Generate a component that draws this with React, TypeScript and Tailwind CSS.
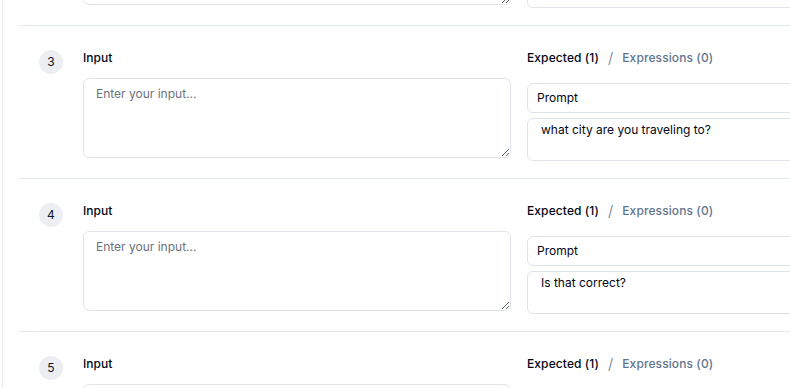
const ROWS = [
  { n: 2, expected: '', partial: true },
  { n: 3, expected: 'what city are you traveling to?', partial: false },
  { n: 4, expected: 'Is that correct?', partial: false },
  { n: 5, expected: '', partial: false },
];

function Row({ n, expected, partial }: { n: number; expected: string; partial: boolean }) {
  return (
    <div className="ml-4 flex border-t border-[#e2e8f0] pt-6 pb-[17px]">
      <div className="flex w-16 shrink-0 justify-center">
        {!partial && (
          <span className="flex h-6 w-6 items-center justify-center rounded-full bg-[#eceef1] text-xs text-slate-900">
            {n}
          </span>
        )}
      </div>
      <div className="w-[428px] shrink-0">
        <div className="flex h-4 items-center text-xs font-medium text-slate-950">{partial ? '' : 'Input'}</div>
        <textarea
          placeholder={partial ? '' : 'Enter your input...'}
          className="mt-3 block h-20 w-full rounded-md border border-[#dfe4ec] bg-white px-3 py-[7px] text-xs text-slate-900 outline-none placeholder:text-[#6b7280]"
        />
      </div>
      <div className="ml-4 w-[428px] shrink-0">
        <div className="flex h-4 items-center text-xs font-medium">
          {!partial && (
            <>
              <span className="tracking-[0.1px] text-slate-950">Expected (1)</span>
              <span className="mx-[9px] text-[15px] font-light text-slate-500">/</span>
              <span className="tracking-[0.1px] text-slate-500">Expressions (0)</span>
            </>
          )}
        </div>
        <div className="mt-[17px] flex h-[30px] items-center rounded-md border border-[#dfe4ec] bg-white px-[9px] text-xs text-slate-950">
          {partial ? '' : 'Prompt'}
        </div>
        <textarea
          defaultValue={expected}
          className="mt-[5px] block h-[43px] w-full resize-y rounded-md border border-[#dfe4ec] bg-white px-[13px] py-[3px] text-xs text-slate-950 outline-none"
        />
      </div>
    </div>
  );
}

export default function App() {
  return (
    <div
      className="h-screen w-screen overflow-hidden bg-white"
      style={{ fontFamily: 'Inter, "Noto Sans", sans-serif' }}
    >
      <div className="ml-[2px] h-screen overflow-hidden border-l border-[#e6eaf0]">
        <div className="mt-[-128px]">
          {ROWS.map((r) => (
            <Row key={r.n} n={r.n} expected={r.expected} partial={r.partial} />
          ))}
        </div>
      </div>
    </div>
  );
}
